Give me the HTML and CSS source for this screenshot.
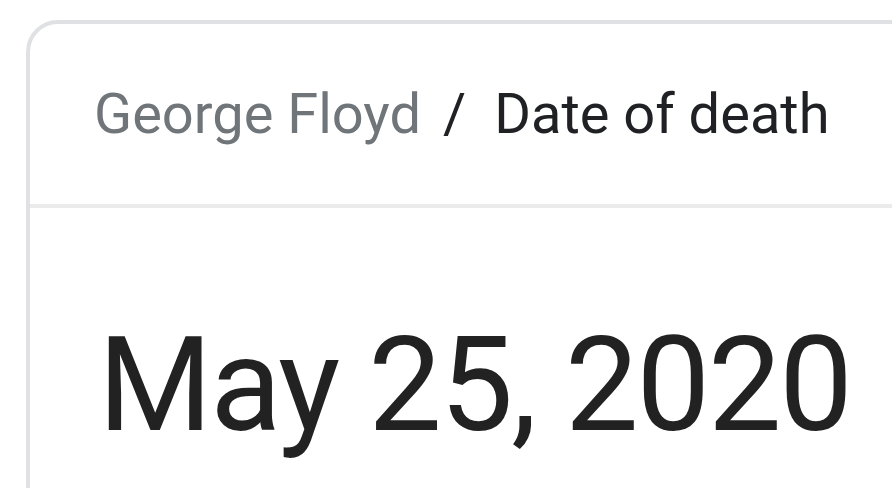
FILE: index.html
```html
<!DOCTYPE html>
<html>
<head>
<meta charset="utf-8">
<link rel="stylesheet" href="styles.css">
</head>
<body>
<div class="card">
  <div class="header">
    <span class="crumb">George Floyd</span>
    <span class="sep">/</span>
    <span class="title">Date of death</span>
  </div>
  <div class="divider"></div>
  <div class="answer">May 25, 2020</div>
</div>
</body>
</html>
```
FILE: styles.css
```css
html, body {
  margin: 0;
  padding: 0;
  background: #ffffff;
  overflow: hidden;
  width: 892px;
  height: 488px;
}
body {
  font-family: Roboto, "Noto Sans", Arial, sans-serif;
  padding: 20px 0 0 26px;
  box-sizing: border-box;
}
.card {
  width: 1000px;
  height: 700px;
  border: 4px solid #dfe1e5;
  border-radius: 32px 0 0 0;
  box-sizing: border-box;
}
.header {
  height: 180px;
  display: flex;
  align-items: center;
  padding-left: 64px;
  font-size: 56px;
  color: #202124;
}
.crumb {
  color: #70757a;
}
.sep {
  margin: 0 28px 0 22px;
}
.divider {
  height: 4px;
  background: #ebebeb;
}
.answer {
  padding: 112px 0 0 68px;
  font-size: 131px;
  letter-spacing: -2.2px;
  line-height: 1;
  color: #222222;
}
```
